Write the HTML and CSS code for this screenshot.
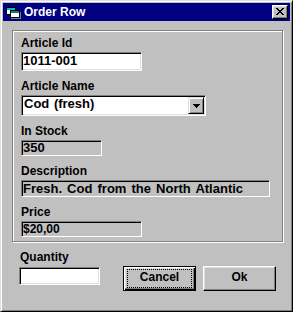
FILE: index.html
```html
<!DOCTYPE html>
<html lang="en">

<head>
    <meta charset="UTF-8">
    <meta name="viewport" content="width=device-width, initial-scale=1.0">
    <title>Order Row</title>
    <link rel="stylesheet" href="styles.css">
</head>

<body>
    <div class="window">
        <!-- Title bar -->
        <div class="title-bar">
            <svg class="title-icon" width="16" height="16" viewBox="0 0 16 16" shape-rendering="crispEdges">
                <rect x="1" y="3" width="10" height="8" fill="#000" />
                <rect x="2" y="4" width="8" height="6" fill="#fff" />
                <rect x="2" y="4" width="8" height="2" fill="#00c0c0" />
                <rect x="5" y="6" width="10" height="8" fill="#000" />
                <rect x="6" y="7" width="8" height="6" fill="#fff" />
                <rect x="6" y="7" width="8" height="2" fill="#008080" />
                <rect x="15" y="8" width="1" height="7" fill="#808080" />
                <rect x="6" y="14" width="10" height="1" fill="#808080" />
            </svg>
            <span class="title-text">Order Row</span>
            <button class="close-btn">
                <svg width="8" height="7" viewBox="0 0 8 7" shape-rendering="crispEdges">
                    <path d="M0 0h2v1H0zM6 0h2v1H6zM1 1h2v1H1zM5 1h2v1H5zM2 2h4v1H2zM3 3h2v1H3zM2 4h4v1H2zM1 5h2v1H1zM5 5h2v1H5zM0 6h2v1H0zM6 6h2v1H6z" fill="#000" />
                </svg>
            </button>
        </div>

        <div class="dialog-body">
            <!-- Article details -->
            <div class="group">
                <div class="field">
                    <span class="field-label">Article Id</span>
                    <div class="edit edit-short">1011-001</div>
                </div>
                <div class="field">
                    <span class="field-label">Article Name</span>
                    <div class="combo">
                        <span class="combo-text">Cod (fresh)</span>
                        <span class="combo-btn">
                            <svg width="7" height="4" viewBox="0 0 7 4" shape-rendering="crispEdges">
                                <path d="M0 0h7v1H0zM1 1h5v1H1zM2 2h3v1H2zM3 3h1v1H3z" fill="#000" />
                            </svg>
                        </span>
                    </div>
                </div>
                <div class="field">
                    <span class="field-label">In Stock</span>
                    <div class="edit edit-readonly edit-stock">350</div>
                </div>
                <div class="field">
                    <span class="field-label">Description</span>
                    <div class="edit edit-readonly edit-desc">Fresh. Cod from the North Atlantic</div>
                </div>
                <div class="field">
                    <span class="field-label">Price</span>
                    <div class="edit edit-readonly edit-short edit-price">$20,00</div>
                </div>
            </div>

            <!-- Quantity and buttons -->
            <div class="bottom-row">
                <div class="quantity">
                    <span class="field-label">Quantity</span>
                    <div class="edit edit-qty"></div>
                </div>
                <button class="btn btn-default"><span class="btn-inner">Cancel</span></button>
                <button class="btn btn-ok"><span class="btn-inner">Ok</span></button>
            </div>
        </div>
    </div>
</body>

</html>
```

FILE: styles.css
```css
/* Win95 dialog */
:root {
    --face: #c0c0c0;
    --light: #dfdfdf;
    --shadow: #808080;
    --title: #000080;
}

* {
    margin: 0;
    padding: 0;
    box-sizing: border-box;
    font-family: 'Liberation Sans', Arial, sans-serif;
}

body {
    background-color: var(--face);
    width: 293px;
    height: 312px;
    overflow: hidden;
}

.window {
    width: 293px;
    height: 312px;
    background-color: var(--face);
    border: 1px solid;
    border-color: var(--light) #000 #000 var(--light);
    box-shadow: inset 1px 1px #fff, inset -1px -1px var(--shadow);
    padding: 2px;
}

.title-bar {
    height: 18px;
    background-color: var(--title);
    display: flex;
    align-items: center;
    padding: 0 2px;
    color: white;
}

.title-icon {
    display: block;
    flex-shrink: 0;
}

.title-text {
    flex: 1;
    margin-left: 3px;
    font-size: 12px;
    font-weight: bold;
    line-height: 14px;
}

.close-btn {
    width: 16px;
    height: 14px;
    background-color: var(--face);
    border: 1px solid;
    border-color: #fff #000 #000 #fff;
    box-shadow: inset -1px -1px var(--shadow), inset 1px 1px var(--light);
    display: flex;
    align-items: center;
    justify-content: center;
    padding-bottom: 1px;
}

.close-btn svg {
    display: block;
}

.dialog-body {
    padding: 9px 7px 0 9px;
}

/* Group box */
.group {
    border: 1px solid var(--shadow);
    box-shadow: inset 1px 1px #fff, 1px 1px #fff;
    padding: 5px 8px 4px 8px;
}

.field+.field {
    margin-top: 8px;
}

.field-label {
    display: block;
    height: 14px;
    font-size: 12px;
    font-weight: bold;
    line-height: 14px;
    color: #000;
    margin-bottom: 2px;
}

/* Sunken edit boxes */
.edit {
    height: 19px;
    border: 1px solid;
    border-color: var(--shadow) #fff #fff var(--shadow);
    box-shadow: inset 1px 1px #000, inset -1px -1px var(--light);
    background-color: white;
    font-size: 13px;
    font-weight: bold;
    line-height: 16px;
    padding-left: 1px;
    white-space: nowrap;
    overflow: hidden;
    color: #000;
}

.edit-short {
    width: 121px;
}

.edit-readonly {
    background-color: var(--face);
    box-shadow: inset 1px 1px #000, inset -1px -1px var(--face);
    height: 16px;
    line-height: 14px;
}

.edit-stock {
    width: 81px;
}

.edit-desc {
    width: 249px;
    height: 17px;
    line-height: 16px;
    word-spacing: 1.5px;
}

.edit-price {
    font-size: 12px;
}

/* Combo box */
.combo {
    width: 185px;
    height: 21px;
    display: flex;
    border: 1px solid;
    border-color: var(--shadow) #fff #fff var(--shadow);
    box-shadow: inset 1px 1px #000, inset -1px -1px var(--light);
    background-color: white;
}

.combo-text {
    flex: 1;
    padding-left: 2px;
    font-size: 13px;
    font-weight: bold;
    line-height: 14px;
    word-spacing: 1px;
    padding-top: 1px;
}

.combo-btn {
    width: 16px;
    height: 17px;
    margin: 1px 1px 1px 0;
    background-color: var(--face);
    border: 1px solid;
    border-color: var(--light) #000 #000 var(--light);
    box-shadow: inset 1px 1px #fff, inset -1px -1px var(--shadow);
    display: flex;
    align-items: center;
    justify-content: center;
}

.combo-btn svg {
    display: block;
}

/* Bottom row */
.bottom-row {
    display: flex;
    align-items: flex-start;
    margin-top: 8px;
    padding-left: 7px;
}

.quantity .field-label {
    padding-left: 1px;
    margin-bottom: 3px;
}

.edit-qty {
    width: 81px;
    height: 18px;
}

.btn {
    width: 73px;
    height: 25px;
    margin-top: 16px;
    background-color: var(--face);
    border: 1px solid;
    border-color: #fff #000 #000 #fff;
    box-shadow: inset -1px -1px var(--shadow), inset 1px 1px var(--light);
    padding: 2px 3px;
    cursor: pointer;
}

.btn-default {
    margin-left: 23px;
    border-color: #000;
    box-shadow: inset 1px 1px #fff, inset -1px -1px #000, inset -2px -2px var(--shadow), inset 2px 2px var(--light);
}

.btn-ok {
    margin-left: 7px;
}

.btn-inner {
    display: block;
    height: 19px;
    border: 1px dotted transparent;
    font-size: 12px;
    font-weight: bold;
    line-height: 14px;
    text-align: center;
    color: #000;
}

.btn-default .btn-inner {
    border-color: #000;
}
```
